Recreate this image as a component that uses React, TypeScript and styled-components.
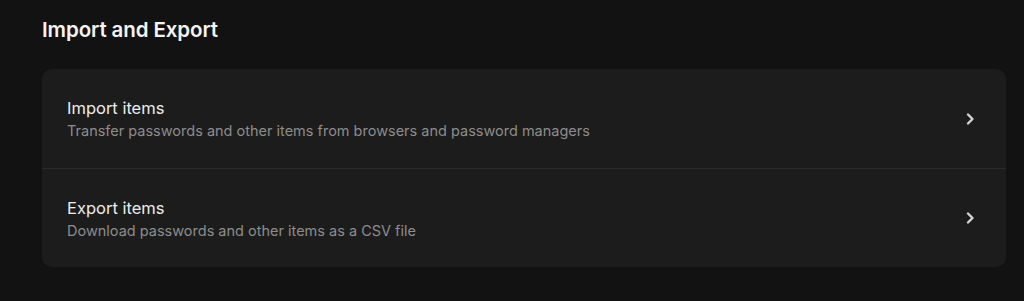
import React from "react";
import styled, { createGlobalStyle } from "styled-components";

const GlobalStyle = createGlobalStyle`
  html, body {
    margin: 0;
    background: #121212;
  }
  body {
    font-family: Inter, "Noto Sans", sans-serif;
    -webkit-font-smoothing: antialiased;
  }
`;

const Page = styled.div`
  padding: 16px 18px 34px 42px;
  height: 301px;
  box-sizing: border-box;
`;

const Heading = styled.h2`
  margin: 0 0 26px;
  font-size: 20.5px;
  line-height: 27px;
  font-weight: 600;
  color: #f4f4f4;
  letter-spacing: -0.1px;
`;

const Card = styled.div`
  background: #1c1c1c;
  border-radius: 10px;
  overflow: hidden;
`;

const Row = styled.div<{ $divider?: boolean }>`
  display: flex;
  align-items: center;
  height: 99px;
  padding: 0 30px 0 25px;
  box-sizing: border-box;
  border-top: ${(p) => (p.$divider ? "1px solid #2b2b2b" : "none")};
  cursor: pointer;
`;

const Texts = styled.div`
  flex: 1;
  display: flex;
  flex-direction: column;
  gap: 2px;
`;

const Title = styled.div`
  font-size: 16.5px;
  line-height: 22px;
  color: #ececec;
  font-weight: 400;
`;

const Subtitle = styled.div`
  font-size: 14.5px;
  line-height: 19px;
  color: #8c8c8c;
`;

const Chevron = () => (
  <svg width="12" height="14" viewBox="0 0 12 14">
    <path
      d="M4 2.5 L8.5 7 L4 11.5"
      fill="none"
      stroke="#d4d4d4"
      strokeWidth="2.4"
      strokeLinecap="round"
      strokeLinejoin="round"
    />
  </svg>
);

const items = [
  {
    title: "Import items",
    desc: "Transfer passwords and other items from browsers and password managers",
  },
  {
    title: "Export items",
    desc: "Download passwords and other items as a CSV file",
  },
];

export default function App() {
  return (
    <>
      <GlobalStyle />
      <Page>
        <Heading>Import and Export</Heading>
        <Card>
          {items.map((it, i) => (
            <Row key={it.title} $divider={i > 0}>
              <Texts>
                <Title>{it.title}</Title>
                <Subtitle>{it.desc}</Subtitle>
              </Texts>
              <Chevron />
            </Row>
          ))}
        </Card>
      </Page>
    </>
  );
}
